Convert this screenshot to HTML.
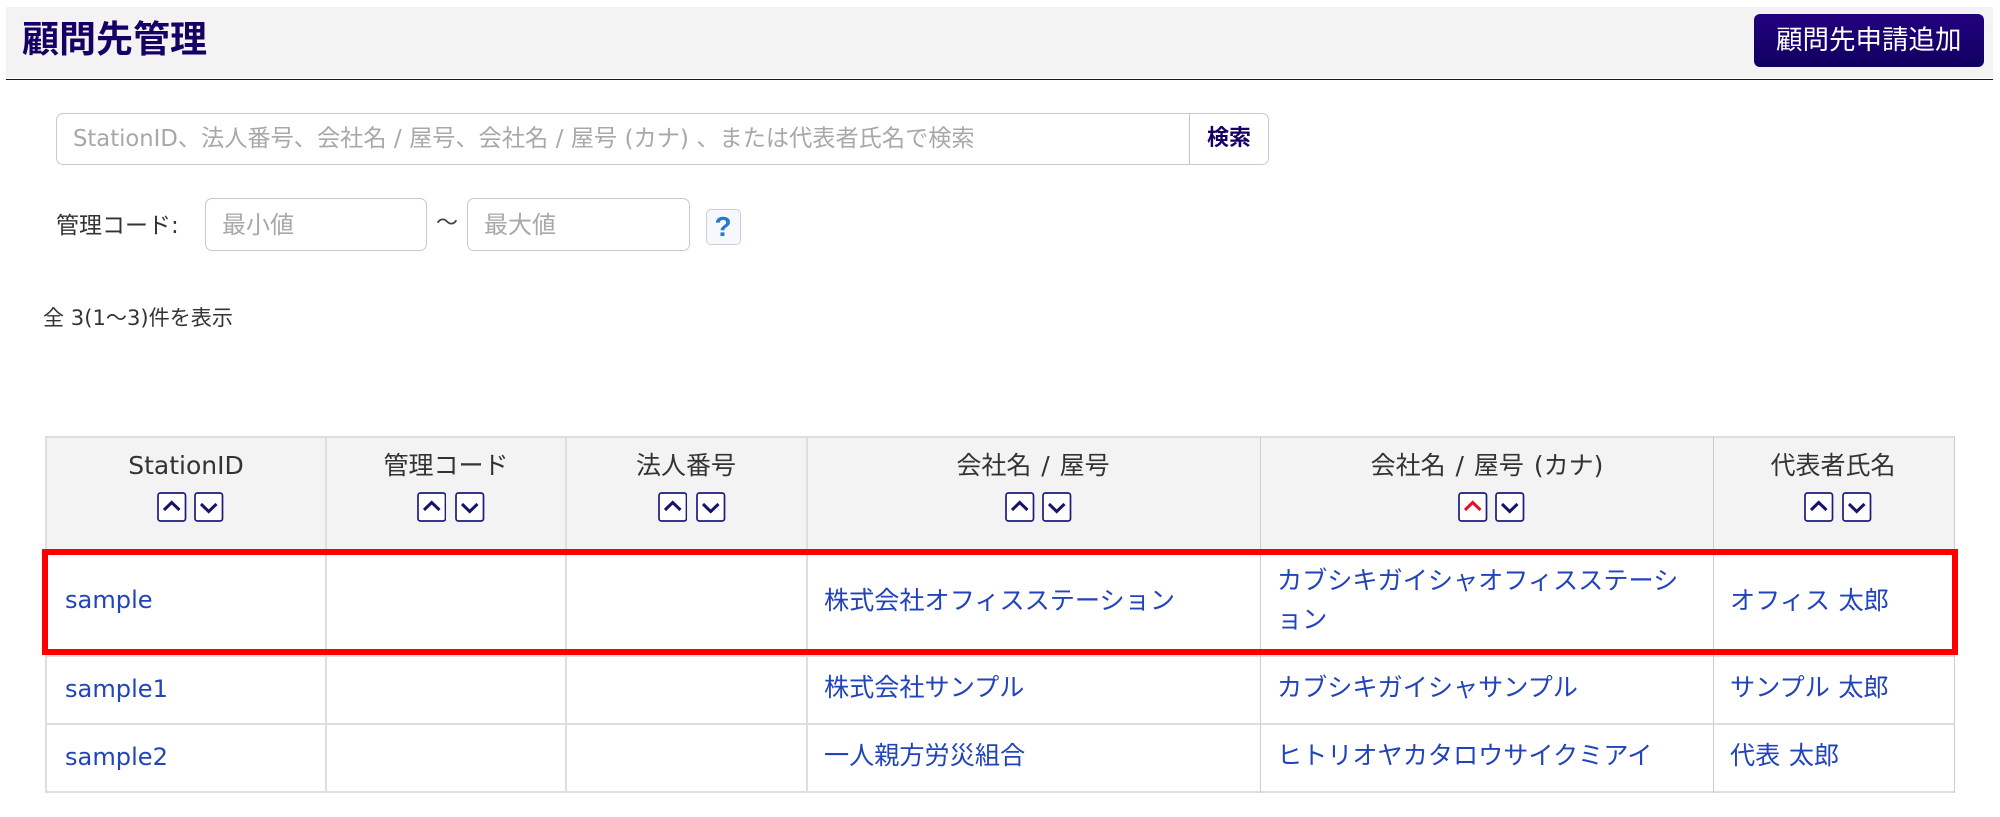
<!DOCTYPE html>
<html lang="ja">
<head>
<meta charset="utf-8">
<title>顧問先管理</title>
<style>
html,body{margin:0;padding:0;background:#fff;}
body{position:relative;width:2000px;height:817px;overflow:hidden;font-family:"DejaVu Sans","Noto Sans CJK JP",sans-serif;color:#333;}
.a{position:absolute;box-sizing:border-box;}
.t{position:absolute;white-space:nowrap;}
.c{transform:translateX(-50%);}
.box{position:absolute;box-sizing:border-box;background:#fff;border:1.5px solid #c9c9c9;border-radius:7px;}
.ph{color:#a8a8a8;}
.l{position:absolute;background:#dedede;}
.th{font-size:25px;height:40px;line-height:40px;top:446px;color:#333;word-spacing:2px;}
.td{font-size:25.15px;height:40px;line-height:40px;color:#2244bb;word-spacing:0.6px;}
.id{font-size:24.1px;}
.s{position:absolute;top:492px;width:29.5px;height:30px;display:block;}
</style>
</head>
<body>
<div class="a" style="left:6px;top:7px;width:1987px;height:71px;background:#f3f3f3;"></div>
<div class="a" style="left:6px;top:78.5px;width:1987px;height:1.5px;background:#1a0a6e;"></div>
<div class="t" style="left:22px;top:17px;height:46px;line-height:46px;font-size:37px;font-weight:700;color:#160066;">顧問先管理</div>
<div class="a" style="left:1754px;top:14px;width:230px;height:53px;border-radius:6px;background:linear-gradient(#24007f,#0e005f);"></div>
<div class="t" style="left:1776px;top:21px;height:40px;line-height:40px;font-size:26.5px;color:#fff;">顧問先申請追加</div>

<div class="box" style="left:56px;top:113px;width:1213px;height:52px;"></div>
<div class="a" style="left:1189px;top:113px;width:1px;height:52px;background:#c4c4c4;"></div>
<div class="t ph" style="left:73px;top:119px;height:40px;line-height:40px;font-size:23.2px;"><span style="font-size:22.7px">StationID</span>、法人番号、会社名 / 屋号、会社名 / 屋号 (カナ) 、または代表者氏名で検索</div>
<div class="t" style="left:1207px;top:119px;height:40px;line-height:40px;font-size:22px;font-weight:700;color:#160066;">検索</div>

<div class="t" style="left:56px;top:206px;height:40px;line-height:40px;font-size:23px;color:#333;">管理コード:</div>
<div class="box" style="left:205px;top:198px;width:222px;height:53px;"></div>
<div class="t ph" style="left:222px;top:205px;height:40px;line-height:40px;font-size:24px;">最小値</div>
<div class="t" style="left:436px;top:204px;height:40px;line-height:40px;font-size:22px;color:#444;">〜</div>
<div class="box" style="left:467px;top:198px;width:223px;height:53px;"></div>
<div class="t ph" style="left:484px;top:205px;height:40px;line-height:40px;font-size:24px;">最大値</div>
<div class="a" style="left:705.5px;top:209px;width:35px;height:36px;background:#f5f9fd;border:1.5px solid #cfcfcf;border-radius:5px;"></div>
<div class="t" style="left:714.5px;top:207px;height:40px;line-height:40px;font-size:28px;font-weight:700;color:#2a78c8;font-family:'Liberation Sans',sans-serif;">?</div>

<div class="t" style="left:43px;top:298px;height:40px;line-height:40px;font-size:21.1px;color:#333;">全 3(1〜3)件を表示</div>

<!-- table -->
<div class="a" style="left:46px;top:437px;width:1908px;height:113px;background:#f3f3f3;"></div>
<div class="l" style="left:45px;top:436px;width:1909px;height:2px;"></div>
<div class="l" style="left:45px;top:655px;width:1909px;height:2px;"></div>
<div class="l" style="left:45px;top:723px;width:1909px;height:2px;"></div>
<div class="l" style="left:45px;top:791px;width:1909px;height:2px;"></div>
<div class="l" style="left:45px;top:436px;width:2px;height:357px;"></div>
<div class="l" style="left:325px;top:436px;width:2px;height:357px;"></div>
<div class="l" style="left:565px;top:436px;width:2px;height:357px;"></div>
<div class="l" style="left:806px;top:436px;width:2px;height:357px;"></div>
<div class="l" style="left:1260px;top:436px;width:1px;height:357px;background:#cdcdcd;"></div>
<div class="l" style="left:1713px;top:436px;width:1px;height:357px;background:#cdcdcd;"></div>
<div class="l" style="left:1954px;top:436px;width:1px;height:357px;background:#cdcdcd;"></div>

<div class="t th c" style="left:186px;">StationID</div>
<div class="t th c" style="left:446px;">管理コード</div>
<div class="t th c" style="left:686px;">法人番号</div>
<div class="t th c" style="left:1033px;">会社名 / 屋号</div>
<div class="t th c" style="left:1487px;">会社名 / 屋号 (カナ)</div>
<div class="t th c" style="left:1833px;">代表者氏名</div>

<svg class="s" style="left:157px" viewBox="0 0 29.5 30"><rect x="1" y="1" width="27.5" height="28" rx="2.5" fill="#fff" stroke="#1c1a80" stroke-width="1.7"/><polyline points="7,18 14.7,10.5 22.5,18" fill="none" stroke="#14146e" stroke-width="3"/></svg>
<svg class="s" style="left:194px" viewBox="0 0 29.5 30"><rect x="1" y="1" width="27.5" height="28" rx="2.5" fill="#fff" stroke="#1c1a80" stroke-width="1.7"/><polyline points="7,12 14.7,19.5 22.5,12" fill="none" stroke="#14146e" stroke-width="3"/></svg>
<svg class="s" style="left:416.5px" viewBox="0 0 29.5 30"><rect x="1" y="1" width="27.5" height="28" rx="2.5" fill="#fff" stroke="#1c1a80" stroke-width="1.7"/><polyline points="7,18 14.7,10.5 22.5,18" fill="none" stroke="#14146e" stroke-width="3"/></svg>
<svg class="s" style="left:455px" viewBox="0 0 29.5 30"><rect x="1" y="1" width="27.5" height="28" rx="2.5" fill="#fff" stroke="#1c1a80" stroke-width="1.7"/><polyline points="7,12 14.7,19.5 22.5,12" fill="none" stroke="#14146e" stroke-width="3"/></svg>
<svg class="s" style="left:657.5px" viewBox="0 0 29.5 30"><rect x="1" y="1" width="27.5" height="28" rx="2.5" fill="#fff" stroke="#1c1a80" stroke-width="1.7"/><polyline points="7,18 14.7,10.5 22.5,18" fill="none" stroke="#14146e" stroke-width="3"/></svg>
<svg class="s" style="left:696px" viewBox="0 0 29.5 30"><rect x="1" y="1" width="27.5" height="28" rx="2.5" fill="#fff" stroke="#1c1a80" stroke-width="1.7"/><polyline points="7,12 14.7,19.5 22.5,12" fill="none" stroke="#14146e" stroke-width="3"/></svg>
<svg class="s" style="left:1005px" viewBox="0 0 29.5 30"><rect x="1" y="1" width="27.5" height="28" rx="2.5" fill="#fff" stroke="#1c1a80" stroke-width="1.7"/><polyline points="7,18 14.7,10.5 22.5,18" fill="none" stroke="#14146e" stroke-width="3"/></svg>
<svg class="s" style="left:1042px" viewBox="0 0 29.5 30"><rect x="1" y="1" width="27.5" height="28" rx="2.5" fill="#fff" stroke="#1c1a80" stroke-width="1.7"/><polyline points="7,12 14.7,19.5 22.5,12" fill="none" stroke="#14146e" stroke-width="3"/></svg>
<svg class="s" style="left:1458px" viewBox="0 0 29.5 30"><rect x="1" y="1" width="27.5" height="28" rx="2.5" fill="#fff" stroke="#1c1a80" stroke-width="1.7"/><polyline points="7,18 14.7,10.5 22.5,18" fill="none" stroke="#e8101c" stroke-width="3"/></svg>
<svg class="s" style="left:1495px" viewBox="0 0 29.5 30"><rect x="1" y="1" width="27.5" height="28" rx="2.5" fill="#fff" stroke="#1c1a80" stroke-width="1.7"/><polyline points="7,12 14.7,19.5 22.5,12" fill="none" stroke="#14146e" stroke-width="3"/></svg>
<svg class="s" style="left:1804px" viewBox="0 0 29.5 30"><rect x="1" y="1" width="27.5" height="28" rx="2.5" fill="#fff" stroke="#1c1a80" stroke-width="1.7"/><polyline points="7,18 14.7,10.5 22.5,18" fill="none" stroke="#14146e" stroke-width="3"/></svg>
<svg class="s" style="left:1842px" viewBox="0 0 29.5 30"><rect x="1" y="1" width="27.5" height="28" rx="2.5" fill="#fff" stroke="#1c1a80" stroke-width="1.7"/><polyline points="7,12 14.7,19.5 22.5,12" fill="none" stroke="#14146e" stroke-width="3"/></svg>

<div class="t td id" style="left:65px;top:580px;">sample</div>
<div class="t td" style="left:824px;top:581px;">株式会社オフィスステーション</div>
<div class="t td" style="left:1277px;top:561px;">カブシキガイシャオフィスステーシ</div>
<div class="t td" style="left:1277px;top:600px;">ョン</div>
<div class="t td" style="left:1730px;top:581px;">オフィス 太郎</div>

<div class="t td id" style="left:65px;top:669px;">sample1</div>
<div class="t td" style="left:824px;top:668px;">株式会社サンプル</div>
<div class="t td" style="left:1277px;top:668px;">カブシキガイシャサンプル</div>
<div class="t td" style="left:1730px;top:668px;">サンプル 太郎</div>

<div class="t td id" style="left:65px;top:737px;">sample2</div>
<div class="t td" style="left:824px;top:736px;">一人親方労災組合</div>
<div class="t td" style="left:1277px;top:736px;">ヒトリオヤカタロウサイクミアイ</div>
<div class="t td" style="left:1730px;top:736px;">代表 太郎</div>

<!-- red highlight -->
<div class="a" style="left:42px;top:549px;width:1916px;height:106px;border:6px solid #ff0000;"></div>
</body>
</html>
